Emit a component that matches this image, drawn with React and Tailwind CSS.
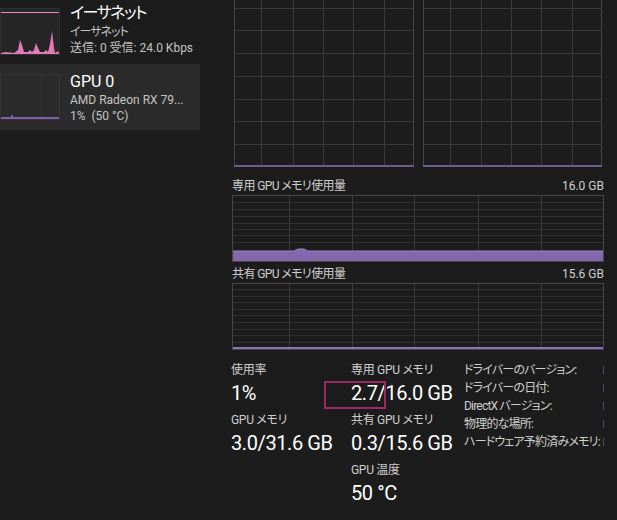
const GRID = "#3a3a3a";
const EDGE = "#454545";
const PURPLE = "#6e5c90";

function TopGraph({ xs, w }) {
  const ys = [8, 30, 53, 76, 99, 121, 144];
  return (
    <svg width={w} height={168} className="block">
      {ys.map((y) => (
        <rect key={"h" + y} x={0} y={y} width={w} height={1} fill={GRID} />
      ))}
      {xs.map((x) => (
        <rect key={"v" + x} x={x} y={0} width={1} height={166} fill={GRID} />
      ))}
      <rect x={0} y={0} width={1} height={167} fill={EDGE} />
      <rect x={w - 1} y={0} width={1} height={167} fill={EDGE} />
      <rect x={0} y={165} width={w} height={2} fill={PURPLE} />
    </svg>
  );
}

function MemGraph({ ys, fill }) {
  const w = 372;
  const h = 67;
  const xs = [57, 120, 182, 246, 309];
  return (
    <svg width={w} height={h} className="block">
      {ys.map((y) => (
        <rect key={"h" + y} x={0} y={y} width={w} height={1} fill="#303030" />
      ))}
      {xs.map((x) => (
        <rect key={"v" + x} x={x} y={0} width={1} height={h} fill={GRID} />
      ))}
      <rect x={0.5} y={0.5} width={w - 1} height={h - 1} fill="none" stroke={EDGE} />
      {fill ? (
        <>
          <path d="M1 56 L62 56 L66 54 L72 54 L76 56 L371 56 L371 66 L1 66 Z" fill="#8368ae" />
          <path d="M1 56 L62 56 L66 54 L72 54 L76 56 L371 56" fill="none" stroke="#9d84c8" />
        </>
      ) : (
        <rect x={1} y={64} width={w - 2} height={2} fill="#8a72b8" />
      )}
    </svg>
  );
}

function EthThumb() {
  return (
    <svg width={60} height={47} className="block">
      <rect x={0} y={0} width={60} height={47} fill="#262626" />
      <rect x={0.5} y={0.5} width={59} height={46} fill="none" stroke="#303030" />
      <line x1={1} x2={59} y1={4.5} y2={4.5} stroke="#ee85c6" />
      <path
        d="M1 45 L6 44 L14 45 L18 42 L20 32 L22 37 L24 44 L28 44 L30 42 L32 44 L34 42 L36 35 L38 40 L40 44 L44 44 L46 42 L48 44 L50 36 L52 23 L54 40 L55 45 L58 43 L59 45 L59 46 L1 46 Z"
        fill="#e27ab8"
      />
    </svg>
  );
}

function GpuThumb() {
  return (
    <svg width={60} height={46} className="block">
      <rect x={0.5} y={0.5} width={59} height={45} fill="none" stroke="#343434" />
      <line x1={41.5} x2={41.5} y1={1} y2={44} stroke="#2f2f2f" />
      <rect x={1} y={43} width={58} height={2} fill="#7b64a6" />
      <rect x={11} y={41} width={2} height={2} fill="#7b64a6" />
    </svg>
  );
}

function Stat({ label, value, boxed }) {
  return (
    <div className="flex flex-col">
      <span className="text-[12px] leading-[18px] tracking-[-0.3px] text-[#cfcfcf]">{label}</span>
      <span className="relative text-[20px] leading-[28px] tracking-[-0.4px] text-white whitespace-nowrap">
        {boxed && (
          <span className="absolute left-[-27px] top-[2px] w-[62px] h-[28px] border-2 border-[#9c2a62]" />
        )}
        {value}
      </span>
    </div>
  );
}

export default function App() {
  const info = [
    "ドライバーのバージョン:",
    "ドライバーの日付:",
    "DirectX バージョン:",
    "物理的な場所:",
    "ハードウェア予約済みメモリ:",
  ];
  return (
    <div className="w-[617px] h-[520px] overflow-hidden bg-[#1c1c1c] flex font-['Roboto','Noto_Sans_CJK_JP',sans-serif] [font-feature-settings:'palt']">
      {/* sidebar */}
      <div className="w-[200px] shrink-0 flex flex-col">
        <div className="flex h-[64px] pt-[8px]">
          <EthThumb />
          <div className="ml-[10px] flex flex-col">
            <span className="text-[16px] leading-[20px] mt-[-5px] tracking-[-1.5px] text-white">イーサネット</span>
            <span className="text-[12px] leading-[16px] mt-[1px] tracking-[-1px] text-[#c4c4c4]">イーサネット</span>
            <span className="text-[12px] leading-[16px] text-[#c4c4c4] whitespace-nowrap">送信: 0 受信: 24.0 Kbps</span>
          </div>
        </div>
        <div className="flex h-[66px] bg-[#2b2b2b] pt-[10px]">
          <GpuThumb />
          <div className="ml-[10px] flex flex-col">
            <span className="text-[16px] leading-[20px] mt-[-2px] text-white">GPU 0</span>
            <span className="text-[12px] leading-[16px] text-[#c4c4c4]">AMD Radeon RX 79...</span>
            <span className="text-[12px] leading-[16px] text-[#c4c4c4] whitespace-pre">1%  (50 °C)</span>
          </div>
        </div>
      </div>

      {/* main */}
      <div className="flex-1 flex flex-col pl-[32px]">
        <div className="flex gap-[9px] pl-[2px]">
          <TopGraph w={180} xs={[27, 59, 89, 119, 150]} />
          <TopGraph w={179} xs={[27, 58, 88, 118, 149]} />
        </div>

        <div className="w-[372px] flex justify-between items-end mt-[10px] text-[12px] leading-[17px] text-[#cfcfcf]">
          <span className="tracking-[-0.6px]">専用 GPU メモリ使用量</span>
          <span>16.0 GB</span>
        </div>
        <MemGraph fill ys={[7, 14, 21, 28, 34, 40, 47]} />

        <div className="w-[372px] flex justify-between items-end mt-[4px] text-[12px] leading-[17px] text-[#cfcfcf]">
          <span className="tracking-[-0.6px]">共有 GPU メモリ使用量</span>
          <span>15.6 GB</span>
        </div>
        <MemGraph ys={[6, 13, 19, 26, 32, 39, 46, 52, 59]} />

        <div className="flex mt-[11px]">
          <div className="w-[120px] flex flex-col gap-[4px] ml-[-1px]">
            <Stat label="使用率" value="1%" />
            <Stat label="GPU メモリ" value="3.0/31.6 GB" />
          </div>
          <div className="w-[113px] flex flex-col gap-[4px]">
            <Stat label="専用 GPU メモリ" value="2.7/16.0 GB" boxed />
            <Stat label="共有 GPU メモリ" value="0.3/15.6 GB" />
            <Stat label="GPU 温度" value="50 °C" />
          </div>
          <div className="flex-1 flex flex-col">
            {info.map((t) => (
              <div key={t} className="flex h-[18px] items-center">
                <span className="w-[139px] text-[12px] leading-[18px] tracking-[-0.8px] text-[#cfcfcf] whitespace-nowrap overflow-hidden">{t}</span>
                <span className="w-[1px] h-[8px] bg-[#3d5170]" />
              </div>
            ))}
          </div>
        </div>
      </div>
    </div>
  );
}
